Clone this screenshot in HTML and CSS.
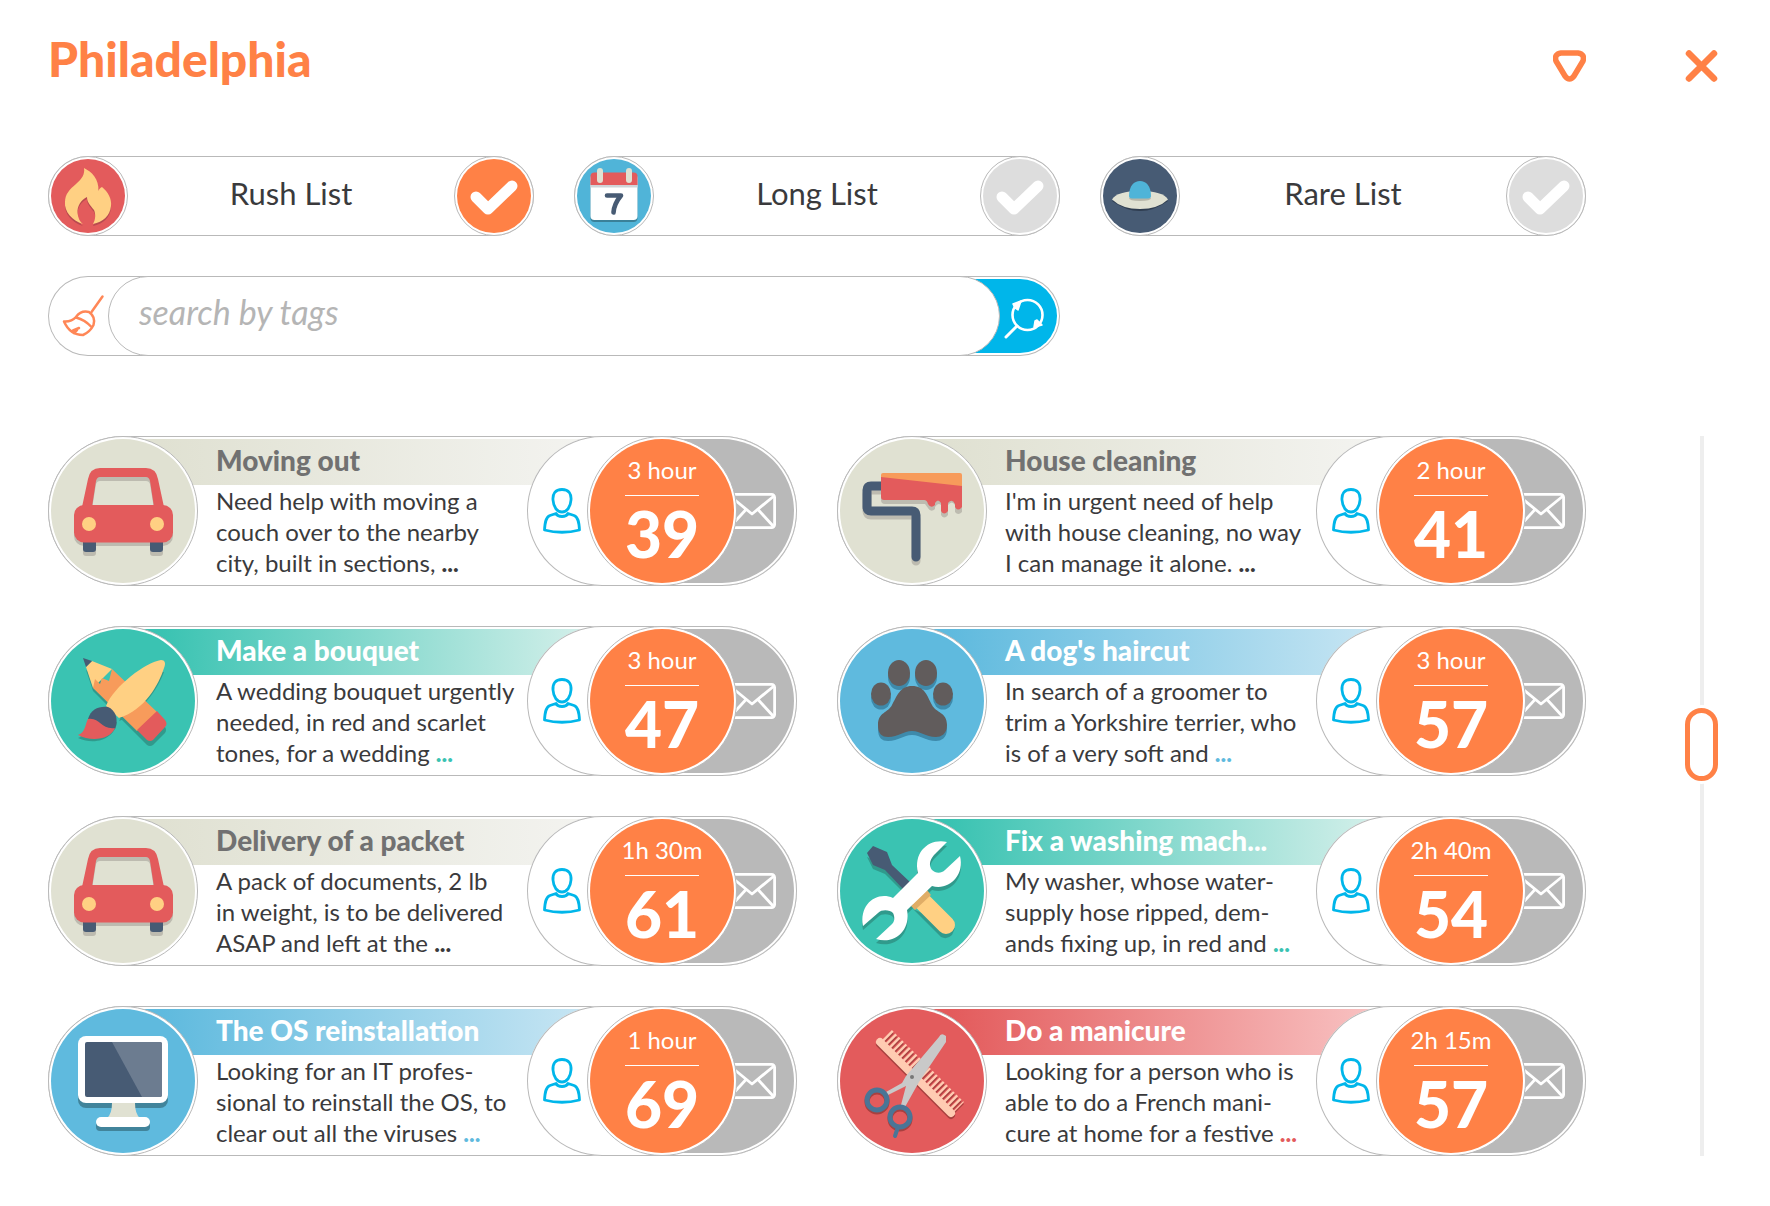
FILE: index.html
```html
<!DOCTYPE html>
<html lang="en">
<head>
<meta charset="utf-8">
<meta name="viewport" content="width=device-width, initial-scale=1">
<title>Philadelphia</title>
<link rel="stylesheet" href="styles.css">
</head>
<body>
<svg class="sprite" aria-hidden="true">
  <symbol id="check" viewBox="0 0 80 80"><path d="M22 41L34 53L58 30" fill="none" stroke="#fff" stroke-width="11" stroke-linecap="round" stroke-linejoin="round"/></symbol>
  <symbol id="person" viewBox="0 0 38 46"><g fill="none" stroke="#00b6ea" stroke-width="2.8" stroke-linejoin="round"><path d="M19 1.5C26 1.5 28.500 6 28 12C27.500 19 24 24 19 24C14 24 10.500 19 10 12C9.500 6 12 1.500 19 1.500Z"/><path d="M1.500 42C2 34 3 29 7 27.500L13 25.500C15 29.500 23 29.500 25 25.500L31 27.500C35 29 36 34 36.500 42Q19 46.500 1.500 42Z"/></g></symbol>
  <symbol id="mail" viewBox="0 0 48 36"><g fill="none" stroke="#fff" stroke-width="2.8" stroke-linejoin="round"><rect x="1.400" y="1.400" width="45.200" height="33.200" rx="3"/><path d="M2 3L24 21L46 3M2 34L18 16.500M46 34L30 16.500"/></g></symbol>
  <symbol id="car" viewBox="0 0 150 150">
    <g fill="#bdbbb0"><path d="M34 73L41 46Q43 36 52 36H98Q107 36 109 46L115 73H106L102 48Q101 45 98 45H52Q49 45 48 48L44 73Z"/><rect x="26" y="73" width="99" height="37" rx="10"/><rect x="35" y="100" width="13" height="20" rx="3"/><rect x="102" y="100" width="13" height="20" rx="3"/></g>
    <g fill="#475b74"><rect x="35" y="98" width="13" height="18" rx="3"/><rect x="102" y="98" width="13" height="18" rx="3"/></g>
    <g fill="#e35b5c"><path d="M34 71L40 43Q42 32 52 32H98Q108 32 110 43L116 71H106L102 45Q101 41 98 41H52Q49 41 48 45L44 71Z"/><rect x="26" y="69" width="99" height="37.500" rx="10"/></g>
    <g fill="#ffd083"><circle cx="41" cy="88" r="7"/><circle cx="109" cy="88" r="7"/></g>
  </symbol>
</svg>

<div class="page">
  <header class="top">
    <h1 class="city">Philadelphia</h1>
    <button class="icon-btn" type="button" aria-label="Choose city"><svg width="33" height="32" viewBox="0 0 33 32"><path d="M8 3H25Q32 4 30 11L21 26Q16.500 32 12 26L3 11Q1 4 8 3Z" fill="none" stroke="#ff8146" stroke-width="5.600" stroke-linejoin="round"/></svg></button>
  </header>
  <button class="icon-btn close" type="button" aria-label="Close"><svg width="33" height="32" viewBox="0 0 33 32"><path d="M4 3.500L29 28.500M29 3.500L4 28.500" stroke="#ff8146" stroke-width="6.500" stroke-linecap="round"/></svg></button>

  <div class="filters">
    <label class="filter">
      <svg class="filter-icon" viewBox="0 0 80 80"><circle cx="40" cy="40" r="39.500" fill="#fff" stroke="#b9b9b9"/><circle cx="40" cy="40" r="37" fill="#e35b5c"/><path fill="#b84a50" transform="translate(0 2)" d="M36 12C44 16 51 23 50.500 35C51 33 52 32 54 31C60 36 64 43 63 50C62 60 55 66 45 68C48 63 47.500 57 46 54C42 49 39 46 39 41C33 44 29 50 29.500 57C30 62 32 66 35 68C24 65 16 55 17 46C17 38 22 33 28 28C34 23 37 18 36 12Z"/><path fill="#ffd083" d="M36 12C44 16 51 23 50.500 35C51 33 52 32 54 31C60 36 64 43 63 50C62 60 55 66 45 68C48 63 47.500 57 46 54C42 49 39 46 39 41C33 44 29 50 29.500 57C30 62 32 66 35 68C24 65 16 55 17 46C17 38 22 33 28 28C34 23 37 18 36 12Z"/></svg>
      <span class="filter-name">Rush List</span>
      <span class="tick"><input type="checkbox" checked><svg><use href="#check"/></svg></span>
    </label>
    <label class="filter">
      <svg class="filter-icon" viewBox="0 0 80 80"><circle cx="40" cy="40" r="39.500" fill="#fff" stroke="#b9b9b9"/><circle cx="40" cy="40" r="37" fill="#50b4d8"/><rect x="16.500" y="18" width="47" height="48" rx="4" fill="#3a8199"/><rect x="16.500" y="18" width="47" height="46" rx="4" fill="#fff"/><path d="M16.500 29V20.500Q16.500 16.500 20.500 16.500H59.500Q63.500 16.500 63.500 20.500V29Z" fill="#e35b5c"/><path d="M16.500 29H63.500V31.500H16.500Z" fill="#d0d5d8"/><g fill="#e0e1d2"><rect x="23" y="12" width="6" height="15" rx="3"/><rect x="52" y="12" width="6" height="15" rx="3"/></g><path d="M33 39.500H47Q40 48 39.500 56.500" fill="none" stroke="#475b74" stroke-width="4.600" stroke-linecap="round" stroke-linejoin="round"/></svg>
      <span class="filter-name">Long List</span>
      <span class="tick"><input type="checkbox"><svg><use href="#check"/></svg></span>
    </label>
    <label class="filter">
      <svg class="filter-icon" viewBox="0 0 80 80"><circle cx="40" cy="40" r="39.500" fill="#fff" stroke="#b9b9b9"/><circle cx="40" cy="40" r="37" fill="#475b74"/><path d="M12 45Q40 28 68 45Q40 65 12 45Z" fill="#2f3d50"/><path d="M12 43.500Q17 35 40 35Q63 35 68 43.500Q58 53 40 53Q22 53 12 43.500Z" fill="#e0e1d2"/><path d="M29 42Q29 45 40 45Q51 45 51 42Z" fill="#b7b6a9"/><path d="M29 40C29 30 34 25 40 25C46 25 51 30 51 40Q51 42.500 48 42.500H32Q29 42.500 29 40Z" fill="#4fb4d8"/></svg>
      <span class="filter-name">Rare List</span>
      <span class="tick"><input type="checkbox"><svg><use href="#check"/></svg></span>
    </label>

    <form class="search">
      <button class="clear" type="reset" aria-label="Clear search"><svg width="60" height="80" viewBox="0 0 60 80"><g fill="none" stroke="#ff8757" stroke-width="2.500" stroke-linecap="round" stroke-linejoin="round"><path d="M54.500 20.500L43.500 36"/><path d="M16 45.500Q23.500 46 28 41Q33 34 41 36Q48 41 45.500 49Q42 56 35 59Q22 59 16 45.500Z"/><path d="M28 41.500Q37 44 43 50.500M31 52L25 54.500M29 54L26 57"/></g></svg></button>
      <input class="search-box" type="text" placeholder="search by tags" aria-label="Search by tags">
      <button class="go" type="submit" aria-label="Search"><svg width="60" height="80" viewBox="0 0 60 80"><circle cx="27.500" cy="39" r="15" fill="none" stroke="#fff" stroke-width="2.600"/><path d="M17 50L6 61" stroke="#fff" stroke-width="3" stroke-linecap="round"/><path d="M13 28L21 25L18 34L15 32ZM37 44L42 49L34 51L35 45Z" fill="#fff" stroke="#fff" stroke-width="1.500" stroke-linejoin="round"/></svg></button>
    </form>
  </div>

  <main class="cards">
    <article class="card beige">
      <svg class="badge" viewBox="0 0 150 150"><circle class="ring" cx="75" cy="75" r="74.500"/><circle class="disc" cx="75" cy="75" r="72"/><use href="#car"/></svg>
      <div class="info"><h2 class="name">Moving out</h2><p class="text">Need help with moving a<br>couch over to the nearby<br>city, built in sections, <a class="more" href="#">...</a></p></div>
      <div class="actions"><button class="who" type="button" aria-label="Profile"><svg width="38" height="46"><use href="#person"/></svg></button><div class="price"><span class="time">3 hour</span><strong class="sum">39</strong></div><button class="write" type="button" aria-label="Message"><svg width="48" height="36"><use href="#mail"/></svg></button></div>
    </article>

    <article class="card beige">
      <svg class="badge" viewBox="0 0 150 150"><circle class="ring" cx="75" cy="75" r="74.500"/><circle class="disc" cx="75" cy="75" r="72"/>
        <path d="M47 54H34Q30 54 30 58V75Q30 79 34 79H75Q79 79 79 83V125" fill="none" stroke="#bdbbb0" stroke-width="9" stroke-linecap="round"/><path d="M44 44H125V76Q121 80 118 76V69Q115 64 111 69V79Q107 84 104 79V69Q101 66 98 71V73Q94 77 91 72L88 68H48Q44 68 44 64Z" fill="#bdbbb0"/>
        <path d="M47 50H34Q30 50 30 54V71Q30 75 34 75H75Q79 75 79 79V121" fill="none" stroke="#475b74" stroke-width="9" stroke-linecap="round"/>
        <path d="M44 40H125V71Q121 76 118 71V68Q115 62 111 67V75Q107 80 104 75V67Q101 62 98 67V69Q94 73 91 68Q90 64 87 64H47Q44 64 44 61Z" fill="#e35b5c"/><path d="M44 41V39Q44 37 46 37H123Q125 37 125 39V50Z" fill="#f79b5b"/></svg>
      <div class="info"><h2 class="name">House cleaning</h2><p class="text">I'm in urgent need of help<br>with house cleaning, no way<br>I can manage it alone. <a class="more" href="#">...</a></p></div>
      <div class="actions"><button class="who" type="button" aria-label="Profile"><svg width="38" height="46"><use href="#person"/></svg></button><div class="price"><span class="time">2 hour</span><strong class="sum">41</strong></div><button class="write" type="button" aria-label="Message"><svg width="48" height="36"><use href="#mail"/></svg></button></div>
    </article>

    <article class="card green">
      <svg class="badge" viewBox="0 0 150 150"><circle class="ring" cx="75" cy="75" r="74.500"/><circle class="disc" cx="75" cy="75" r="72"/>
        <g fill="#309a8c"><path d="M38 44L45 65L99 119Q102 121 105 119L117 107Q119 104 117 101Z"/><path d="M30 112C38 110 37 98 45 90L69 96C68 110 50 121 30 112Z"/><path d="M71 95C95 86 110 62 116 46L100 44Z"/></g>
        <path d="M38 41L44 35L64 43L45 62Z" fill="#ffd083"/><path d="M35 32L44 35L38 41Z" fill="#475b74"/>
        <path d="M64 43L109 86L89 105L45 62L47 53L52 58L54 52L61 55Z" fill="#f79b5b"/><path d="M109 85L117 94Q120 98 117 101L105 114Q102 116 99 114L89 104Z" fill="#e35b5c"/>
        <path d="M113 34C117 34 118 37 116 42C111 58 97 84 71 92L58 80C66 60 98 36 113 34Z" fill="#ffd083"/>
        <path d="M40 93C43 83 51 80 60 81C67 84 71 92 67 103L52 103Z" fill="#475b74"/><path d="M40 93C52 91 53 104 67 102C62 114 43 116 30 109C38 106 37 98 40 93Z" fill="#e35b5c"/></svg>
      <div class="info"><h2 class="name">Make a bouquet</h2><p class="text">A wedding bouquet urgently<br>needed, in red and scarlet<br>tones, for a wedding <a class="more" href="#">...</a></p></div>
      <div class="actions"><button class="who" type="button" aria-label="Profile"><svg width="38" height="46"><use href="#person"/></svg></button><div class="price"><span class="time">3 hour</span><strong class="sum">47</strong></div><button class="write" type="button" aria-label="Message"><svg width="48" height="36"><use href="#mail"/></svg></button></div>
    </article>

    <article class="card blue">
      <svg class="badge" viewBox="0 0 150 150"><circle class="ring" cx="75" cy="75" r="74.500"/><circle class="disc" cx="75" cy="75" r="72"/>
        <g fill="#3e8aab" transform="translate(0 4)"><ellipse cx="62" cy="47" rx="11" ry="13"/><ellipse cx="89" cy="47" rx="11" ry="13"/><ellipse cx="44" cy="68" rx="10" ry="11.500"/><ellipse cx="106" cy="68" rx="10" ry="11.500"/><path d="M75 60C88 60 90 70 95 79C99 87 110 86 110 99C110 108 104 111 99 111C88 111 84 105 75 105C66 105 62 111 51 111C45 111 41 108 41 99C41 86 51 87 55 79C60 70 63 60 75 60Z"/></g>
        <g fill="#615c5c"><ellipse cx="62" cy="47" rx="11" ry="13"/><ellipse cx="89" cy="47" rx="11" ry="13"/><ellipse cx="44" cy="68" rx="10" ry="11.500"/><ellipse cx="106" cy="68" rx="10" ry="11.500"/><path d="M75 60C88 60 90 70 95 79C99 87 110 86 110 99C110 108 104 111 99 111C88 111 84 105 75 105C66 105 62 111 51 111C45 111 41 108 41 99C41 86 51 87 55 79C60 70 63 60 75 60Z"/></g></svg>
      <div class="info"><h2 class="name">A dog's haircut</h2><p class="text">In search of a groomer to<br>trim a Yorkshire terrier, who<br>is of a very soft and <a class="more" href="#">...</a></p></div>
      <div class="actions"><button class="who" type="button" aria-label="Profile"><svg width="38" height="46"><use href="#person"/></svg></button><div class="price"><span class="time">3 hour</span><strong class="sum">57</strong></div><button class="write" type="button" aria-label="Message"><svg width="48" height="36"><use href="#mail"/></svg></button></div>
    </article>

    <article class="card beige">
      <svg class="badge" viewBox="0 0 150 150"><circle class="ring" cx="75" cy="75" r="74.500"/><circle class="disc" cx="75" cy="75" r="72"/><use href="#car"/></svg>
      <div class="info"><h2 class="name">Delivery of a packet</h2><p class="text">A pack of documents, 2 lb<br>in weight, is to be delivered<br>ASAP and left at the <a class="more" href="#">...</a></p></div>
      <div class="actions"><button class="who" type="button" aria-label="Profile"><svg width="38" height="46"><use href="#person"/></svg></button><div class="price"><span class="time">1h 30m</span><strong class="sum">61</strong></div><button class="write" type="button" aria-label="Message"><svg width="48" height="36"><use href="#mail"/></svg></button></div>
    </article>

    <article class="card green">
      <svg class="badge" viewBox="0 0 150 150"><circle class="ring" cx="75" cy="75" r="74.500"/><circle class="disc" cx="75" cy="75" r="72"/>
        <g fill="#309a8c" transform="translate(0 4)"><path d="M30 37L36 49L48 54L68 74L75 67L55 49Z"/><path d="M76 89L104 117Q110 120 115 115L118 108Z"/><path d="M110 26C92 22 76 36 81 57L56 82C40 75 22 88 26 110L41 97C45 93 53 94 56 97C58 101 58 106 54 109L39 123C58 129 74 114 70 94L95 70C111 75 128 60 123 40L108 54C104 58 98 57 95 54C92 50 92 45 97 39Z"/></g>
        <path d="M36 30L50 36L55 49L74 67L66 73L48 54L36 49L30 37Z" fill="#475b74"/><path d="M78 78L109 109" stroke="#ffd083" stroke-width="18" stroke-linecap="round"/><path d="M74 90L90 74L94 79L78 94Z" fill="#e0ad66"/>
        <path d="M110 26C92 22 76 36 81 57L56 82C40 75 22 88 26 110L41 97C45 93 53 94 56 97C58 101 58 106 54 109L39 123C58 129 74 114 70 94L95 70C111 75 128 60 123 40L108 54C104 58 98 57 95 54C92 50 92 45 97 39Z" fill="#fff"/></svg>
      <div class="info"><h2 class="name">Fix a washing mach...</h2><p class="text">My washer, whose water-<br>supply hose ripped, dem-<br>ands fixing up, in red and <a class="more" href="#">...</a></p></div>
      <div class="actions"><button class="who" type="button" aria-label="Profile"><svg width="38" height="46"><use href="#person"/></svg></button><div class="price"><span class="time">2h 40m</span><strong class="sum">54</strong></div><button class="write" type="button" aria-label="Message"><svg width="48" height="36"><use href="#mail"/></svg></button></div>
    </article>

    <article class="card blue">
      <svg class="badge" viewBox="0 0 150 150"><circle class="ring" cx="75" cy="75" r="74.500"/><circle class="disc" cx="75" cy="75" r="72"/>
        <g fill="#41849b"><rect x="30" y="35" width="90" height="67" rx="8"/><rect x="48" y="115" width="54" height="10" rx="4"/></g>
        <path d="M64 97H87Q87 108 92 112H59Q64 108 64 97Z" fill="#e0e1d2"/><rect x="48" y="111" width="54" height="10" rx="5" fill="#fff"/><rect x="30" y="30" width="90" height="67" rx="8" fill="#fff"/><rect x="37" y="36" width="77" height="55" rx="2" fill="#475b74"/><path d="M64 36H112Q114 36 114 38V89Q114 91 112 91H94Z" fill="#6c7c90"/></svg>
      <div class="info"><h2 class="name">The OS reinstallation</h2><p class="text">Looking for an IT profes-<br>sional to reinstall the OS, to<br>clear out all the viruses <a class="more" href="#">...</a></p></div>
      <div class="actions"><button class="who" type="button" aria-label="Profile"><svg width="38" height="46"><use href="#person"/></svg></button><div class="price"><span class="time">1 hour</span><strong class="sum">69</strong></div><button class="write" type="button" aria-label="Message"><svg width="48" height="36"><use href="#mail"/></svg></button></div>
    </article>

    <article class="card red">
      <svg class="badge" viewBox="0 0 150 150"><circle class="ring" cx="75" cy="75" r="74.500"/><circle class="disc" cx="75" cy="75" r="72"/>
        <g stroke="#a8403f" transform="translate(0 2)" fill="none"><path d="M43 36L114 107" stroke-width="8" stroke-linecap="round"/><path d="M50 29L122 101" stroke-width="14" stroke-dasharray="2.400 2.400"/><circle cx="40" cy="94" r="10" stroke-width="5"/><circle cx="63" cy="111" r="10" stroke-width="5"/></g>
        <g stroke="#ffcbb2" fill="none"><path d="M43 36L114 107" stroke-width="8" stroke-linecap="round"/><path d="M50 29L122 101" stroke-width="14" stroke-dasharray="2.400 2.400"/></g>
        <path d="M102 31Q104 26 109 30V36L82 76L68 101L64 99L69 80L51 89L49 86L65 77L69 70Z" fill="#c9c9c9"/><circle cx="75" cy="71" r="2" fill="#777"/>
        <g stroke="#4a7596" fill="none" stroke-width="5"><circle cx="40" cy="94" r="10"/><circle cx="63" cy="111" r="10"/><path d="M61 121L58 130" stroke-width="4" stroke-linecap="round"/></g></svg>
      <div class="info"><h2 class="name">Do a manicure</h2><p class="text">Looking for a person who is<br>able to do a French mani-<br>cure at home for a festive <a class="more" href="#">...</a></p></div>
      <div class="actions"><button class="who" type="button" aria-label="Profile"><svg width="38" height="46"><use href="#person"/></svg></button><div class="price"><span class="time">2h 15m</span><strong class="sum">57</strong></div><button class="write" type="button" aria-label="Message"><svg width="48" height="36"><use href="#mail"/></svg></button></div>
    </article>
  </main>

  <div class="scroll"><input class="slider" type="range" min="0" max="100" value="42" aria-label="Scroll the list"></div>
</div>
</body>
</html>
```
FILE: styles.css
```css
* { box-sizing: border-box; }

body {
  margin: 0;
  background: #fff;
  color: #3a3a3c;
  font-family: Lato, "Open Sans", sans-serif;
}

button {
  border: 0;
  padding: 0;
  background: none;
  font: inherit;
  cursor: pointer;
}

svg { display: block; flex: none; }

.sprite { display: none; }

.page {
  display: grid;
  grid-template-columns: minmax(0, 1fr) 33px;
  column-gap: 99px;
  padding: 36px 52px 50px 48px;
}

.top {
  display: flex;
  justify-content: space-between;
  align-items: flex-end;
  margin-bottom: 74px;
}

.city {
  margin: 0;
  color: #ff8146;
  font-size: 48px;
  font-weight: 900;
  line-height: 46px;
}

.close {
  align-self: end;
  margin-bottom: 74px;
}

.filters {
  grid-column: 1;
  display: grid;
  grid-template-columns: repeat(3, minmax(0, 1fr));
  gap: 40px;
  margin-bottom: 80px;
}

.filter {
  display: flex;
  height: 80px;
  border-radius: 40px;
  box-shadow: inset 0 0 0 1px #b9b9b9;
}

.filter-icon { width: 80px; height: 80px; }

.filter-name {
  flex: 1;
  font-size: 31px;
  line-height: 74px;
  text-align: center;
}

.tick { display: grid; width: 80px; height: 80px; }

.tick input,
.tick svg {
  grid-area: 1 / 1;
  width: 80px;
  height: 80px;
  margin: 0;
}

.tick svg { position: relative; pointer-events: none; }

.tick input {
  appearance: none;
  border: 1px solid #b9b9b9;
  border-radius: 50%;
  padding: 2px;
  background: linear-gradient(#ddd, #ddd) content-box, #fff;
}

.tick input:checked {
  background: linear-gradient(#ff8146, #ff8146) content-box, #fff;
}

.search {
  grid-column: span 2;
  display: flex;
  height: 80px;
  border-radius: 40px;
  box-shadow: inset 0 0 0 1px #b9b9b9;
}

.clear { width: 60px; }

.search-box {
  position: relative;
  flex: 1;
  min-width: 0;
  border: 1px solid #b9b9b9;
  border-radius: 40px;
  padding: 0 30px 10px;
  background: #fff;
  color: inherit;
  font: italic 34px Lato, "Open Sans", sans-serif;
}

.search-box::placeholder { color: #b5b5b5; opacity: 1; }

.go {
  display: flex;
  align-items: center;
  justify-content: flex-end;
  width: 97px;
  margin: 3px 3px 3px -40px;
  border-radius: 0 37px 37px 0;
  background: #00b6ea;
}

.go svg { margin-right: -3px; }

.cards {
  grid-column: 1;
  display: grid;
  grid-template-columns: repeat(2, minmax(0, 1fr));
  gap: 40px;
}

.card {
  display: grid;
  grid-template-columns: 150px minmax(0, 1fr) 270px;
  border-radius: 75px;
  box-shadow: inset 0 0 0 1px #b9b9b9;
}

.beige { --tone: #e0e1d2; --fade: #f4f4f1; --title: #717171; --dots: #3a3a3c; }
.green { --tone: #3ac3b2; --fade: #d9f1ec; --title: #fff; --dots: #3ac3b2; }
.blue { --tone: #5fbade; --fade: #cbe7f4; --title: #fff; --dots: #5fbade; }
.red { --tone: #e35b5c; --fade: #f9c6c6; --title: #fff; --dots: #e35b5c; }

.badge { position: relative; width: 150px; height: 150px; }

.ring { fill: #fff; stroke: #b9b9b9; }

.disc { fill: var(--tone); }

.info { padding-top: 3px; white-space: nowrap; }

.name {
  height: 46px;
  margin: 0 -75px;
  padding-left: 93px;
  background: linear-gradient(90deg, var(--tone) 8%, var(--fade));
  color: var(--title);
  font-size: 28px;
  font-weight: 900;
  line-height: 42px;
}

.text {
  margin: 0;
  padding-left: 18px;
  font-size: 24px;
  line-height: 31px;
}

.more {
  color: var(--dots);
  font-weight: 900;
  text-decoration: none;
}

.actions {
  position: relative;
  display: flex;
  border-radius: 75px;
  background: #fff;
  box-shadow: inset 0 0 0 1px #b9b9b9;
}

.who { width: 60px; padding-left: 16px; }

.price {
  position: relative;
  display: flex;
  flex-direction: column;
  align-items: center;
  width: 150px;
  height: 150px;
  border: 1px solid #b9b9b9;
  border-radius: 50%;
  padding: 2px;
  background: linear-gradient(#ff8146, #ff8146) content-box, #fff;
  color: #fff;
}

.time {
  display: flex;
  justify-content: center;
  width: 74px;
  padding: 10px 0 4px;
  border-bottom: 1px solid #fff;
  font-size: 24px;
  line-height: 42px;
  white-space: nowrap;
}

.sum {
  font-size: 64px;
  font-weight: 900;
  line-height: 75px;
}

.write {
  display: flex;
  align-items: center;
  justify-content: flex-end;
  width: 132px;
  margin: 3px 3px 3px -75px;
  padding-right: 18px;
  border-radius: 0 72px 72px 0;
  background: #b9b9b9;
}

.scroll { grid-column: 2; display: flex; }

.slider {
  appearance: none;
  width: 33px;
  margin: 0;
  background: linear-gradient(#eee, #eee) center / 4px 100% no-repeat;
  writing-mode: vertical-lr;
}

.slider::-webkit-slider-thumb {
  appearance: none;
  width: 33px;
  height: 73px;
  border: 5px solid #ff8146;
  border-radius: 17px;
  background: #fff;
  box-shadow: 0 0 0 3px #fff;
}
```
